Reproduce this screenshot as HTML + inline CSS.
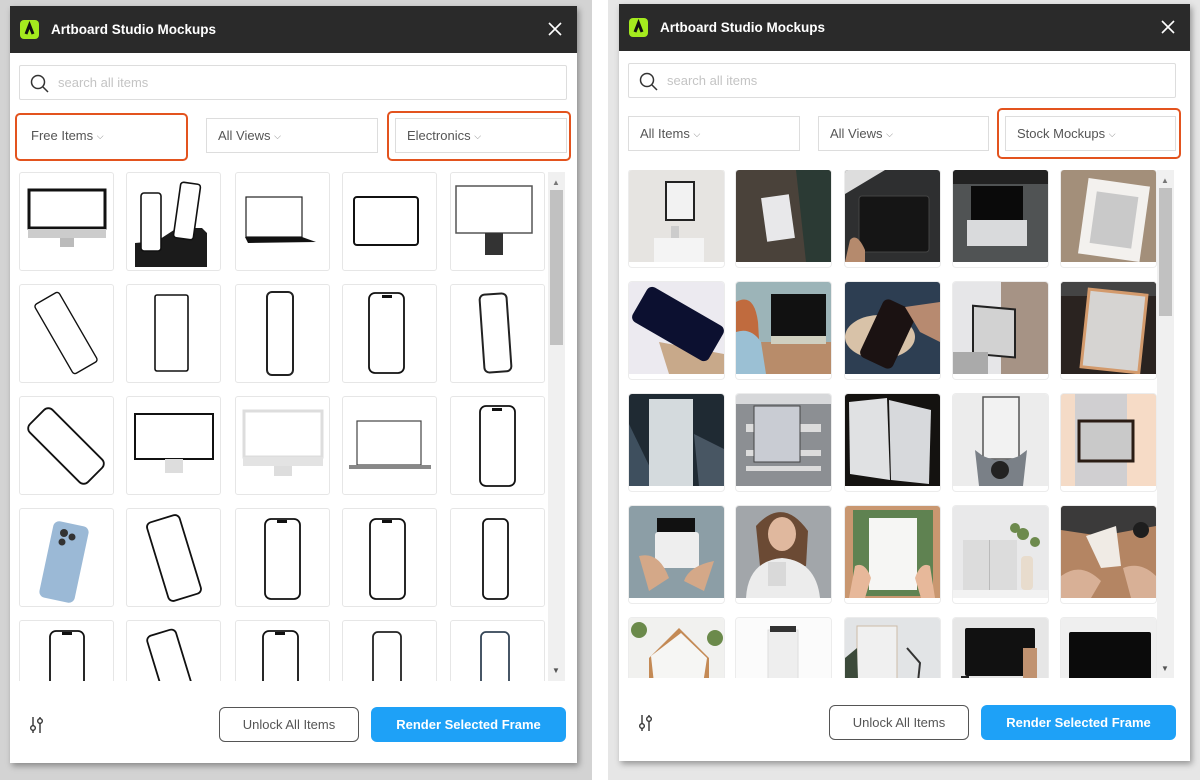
<!DOCTYPE html>
<html><head><meta charset="utf-8"><style>
*{box-sizing:border-box;margin:0;padding:0}
body{width:1200px;height:780px;position:relative;overflow:hidden;background:#fff;font-family:"Liberation Sans",Arial,sans-serif}
.bgL{position:absolute;left:0;top:0;width:592px;height:780px;background:#d3d3d3}
.bgR{position:absolute;left:608px;top:0;width:592px;height:780px;background:#e6e6e6}
.panel{position:absolute;background:#fff;box-shadow:2px 3px 6px rgba(0,0,0,.35);overflow:hidden}
.hdr{position:absolute;left:0;top:0;right:0;height:47px;background:#2a2a2a}
.logo{position:absolute;left:10px;top:14px;width:19px;height:19px;border-radius:4px;background:#a4ea1e}
.title{position:absolute;left:41px;top:16px;color:#fff;font-weight:bold;font-size:13.5px}
.x{position:absolute;right:14px;top:15px}
.a{position:absolute}
.search{border:1px solid #ddd;border-radius:2px;height:35px}
.search span{position:absolute;left:38px;top:9px;color:#c4c4c4;font-size:13px}
.dd{border:1px solid #ddd;height:35px;font-size:13px;color:#555;padding:9px 0 0 11px}
.dd small{font-size:9px;color:#888;position:relative;top:-1px}
.or{border:2px solid #e3531e;border-radius:5px}
.card{position:absolute;width:95px;height:99px;border:1px solid #e6e6e6;border-radius:3px;background:#fff;overflow:hidden}
.ph{position:absolute;width:95px;height:97px;border-radius:3px;overflow:hidden;box-shadow:0 0 0 1px #ececec;background:#fff}
.ph svg{display:block}
.sb{position:absolute;width:17px;background:#f0f0f0}
.btn1{position:absolute;border:1px solid #555;border-radius:6px;height:35px;width:140px;font-size:13px;color:#555;text-align:center;line-height:33px}
.btn2{position:absolute;border-radius:6px;height:35px;background:#1ea1f7;color:#fff;font-weight:bold;font-size:13px;text-align:center;line-height:35px}
</style></head><body>
<div class="bgL"></div><div class="bgR"></div>

<!-- LEFT PANEL -->
<div class="panel" style="left:10px;top:6px;width:567px;height:757px">
 <div class="hdr"><div class="logo"><svg width="19" height="19"><path d="M6 14 L9.5 5 L13 14" stroke="#111" stroke-width="3" fill="none"/></svg></div><div class="title">Artboard Studio Mockups</div>
 <svg class="x" width="16" height="16"><path d="M2 2L14 14M14 2L2 14" stroke="#fff" stroke-width="1.6"/></svg></div>
 <div class="a search" style="left:9px;top:59px;width:548px"><svg class="a" style="left:10px;top:8px" width="20" height="20"><circle cx="8" cy="8" r="6.5" stroke="#333" stroke-width="1.5" fill="none"/><path d="M13 13L18 18" stroke="#333" stroke-width="1.5"/></svg><span>search all items</span></div>
 <div class="a or" style="left:5px;top:107px;width:173px;height:48px"></div>
 <div class="a or" style="left:377px;top:105px;width:184px;height:50px"></div>
 <div class="a dd" style="left:9px;top:112px;width:165px;border-color:transparent">Free Items <small>⌵</small></div>
 <div class="a dd" style="left:196px;top:112px;width:172px">All Views <small>⌵</small></div>
 <div class="a dd" style="left:385px;top:112px;width:172px">Electronics <small>⌵</small></div>
 <div class="a" style="left:0;top:166px;width:567px;height:509px;overflow:hidden">
  <div class="card" style="left:9px;top:0"><svg width="95" height="99"><rect x="9" y="17" width="76" height="38" fill="#fff" stroke="#111" stroke-width="3"/><rect x="8" y="56" width="78" height="9" fill="#ccc"/><rect x="40" y="65" width="14" height="9" fill="#bbb"/></svg></div>
  <div class="card" style="left:116px;top:0"><svg width="95" height="99"><path d="M8 86L8 70L30 68L50 55L75 55L80 60L80 94L8 94Z" fill="#1b1b1b"/><rect x="14" y="20" width="20" height="58" rx="3" fill="#fff" stroke="#111" stroke-width="1.6"/><rect x="50" y="10" width="20" height="56" rx="3" fill="#fff" stroke="#111" stroke-width="1.6" transform="rotate(8 60 38)"/></svg></div>
  <div class="card" style="left:225px;top:0"><svg width="95" height="99"><rect x="10" y="24" width="56" height="40" fill="#fff" stroke="#222" stroke-width="1.2"/><path d="M9 64L66 64L80 69L12 70Z" fill="#111"/></svg></div>
  <div class="card" style="left:332px;top:0"><svg width="95" height="99"><rect x="11" y="24" width="64" height="48" rx="3" fill="#fff" stroke="#111" stroke-width="2"/></svg></div>
  <div class="card" style="left:440px;top:0"><svg width="95" height="99"><rect x="5" y="13" width="76" height="47" fill="#fff" stroke="#555" stroke-width="1.5"/><rect x="34" y="60" width="18" height="22" fill="#333"/></svg></div>
  <div class="card" style="left:9px;top:112px"><svg width="95" height="99"><rect x="32" y="8" width="28" height="80" rx="3" fill="#fff" stroke="#111" stroke-width="1.4" transform="rotate(-30 46 48)"/></svg></div>
  <div class="card" style="left:116px;top:112px"><svg width="95" height="99"><rect x="28" y="10" width="33" height="76" rx="2" fill="#fff" stroke="#111" stroke-width="1.6"/></svg></div>
  <div class="card" style="left:225px;top:112px"><svg width="95" height="99"><rect x="31" y="7" width="26" height="83" rx="5" fill="#fff" stroke="#222" stroke-width="2"/></svg></div>
  <div class="card" style="left:332px;top:112px"><svg width="95" height="99"><rect x="26" y="8" width="35" height="80" rx="6" fill="#fff" stroke="#111" stroke-width="1.8"/><rect x="39" y="10" width="10" height="3" fill="#111"/></svg></div>
  <div class="card" style="left:440px;top:112px"><svg width="95" height="99"><rect x="31" y="9" width="27" height="78" rx="5" fill="#fff" stroke="#222" stroke-width="2" transform="rotate(-4 44 48)"/></svg></div>
  <div class="card" style="left:9px;top:224px"><svg width="95" height="99"><rect x="30" y="8" width="32" height="82" rx="6" fill="#fff" stroke="#111" stroke-width="1.8" transform="rotate(-45 46 49)"/></svg></div>
  <div class="card" style="left:116px;top:224px"><svg width="95" height="99"><rect x="8" y="17" width="78" height="45" fill="#fff" stroke="#111" stroke-width="2"/><rect x="38" y="62" width="18" height="14" fill="#ddd"/></svg></div>
  <div class="card" style="left:225px;top:224px"><svg width="95" height="99"><rect x="8" y="14" width="78" height="46" fill="#fff" stroke="#ddd" stroke-width="3"/><rect x="7" y="60" width="80" height="9" fill="#e3e3e3"/><rect x="38" y="69" width="18" height="10" fill="#ddd"/></svg></div>
  <div class="card" style="left:332px;top:224px"><svg width="95" height="99"><rect x="14" y="24" width="64" height="44" fill="#fff" stroke="#444" stroke-width="1.2"/><rect x="6" y="68" width="82" height="4" fill="#888"/></svg></div>
  <div class="card" style="left:440px;top:224px"><svg width="95" height="99"><rect x="29" y="9" width="35" height="80" rx="6" fill="#fff" stroke="#111" stroke-width="1.8"/><rect x="41" y="11" width="10" height="3" fill="#111"/></svg></div>
  <div class="card" style="left:9px;top:336px"><svg width="95" height="99"><rect x="26" y="14" width="36" height="78" rx="6" fill="#9bb9d6" transform="rotate(12 44 53)"/><circle cx="44" cy="24" r="4" fill="#333"/><circle cx="52" cy="28" r="3.5" fill="#333"/><circle cx="42" cy="33" r="3.5" fill="#333"/></svg></div>
  <div class="card" style="left:116px;top:336px"><svg width="95" height="99"><rect x="30" y="8" width="34" height="82" rx="5" fill="#fff" stroke="#111" stroke-width="1.8" transform="rotate(-17 47 49)"/></svg></div>
  <div class="card" style="left:225px;top:336px"><svg width="95" height="99"><rect x="29" y="10" width="35" height="80" rx="6" fill="#fff" stroke="#111" stroke-width="1.8"/><rect x="41" y="11" width="10" height="3" fill="#111"/></svg></div>
  <div class="card" style="left:332px;top:336px"><svg width="95" height="99"><rect x="27" y="10" width="35" height="80" rx="6" fill="#fff" stroke="#111" stroke-width="1.8"/><rect x="39" y="11" width="10" height="3" fill="#111"/></svg></div>
  <div class="card" style="left:440px;top:336px"><svg width="95" height="99"><rect x="32" y="10" width="25" height="80" rx="5" fill="#fff" stroke="#111" stroke-width="1.8"/></svg></div>
  <div class="card" style="left:9px;top:448px"><svg width="95" height="99"><rect x="30" y="10" width="34" height="90" rx="6" fill="#fff" stroke="#111" stroke-width="1.8"/><rect x="42" y="11" width="10" height="3" fill="#111"/></svg></div>
  <div class="card" style="left:116px;top:448px"><svg width="95" height="99"><rect x="30" y="10" width="30" height="90" rx="5" fill="#fff" stroke="#111" stroke-width="1.8" transform="rotate(-17 45 50)"/></svg></div>
  <div class="card" style="left:225px;top:448px"><svg width="95" height="99"><rect x="27" y="10" width="35" height="90" rx="6" fill="#fff" stroke="#111" stroke-width="1.8"/><rect x="39" y="11" width="10" height="3" fill="#111"/></svg></div>
  <div class="card" style="left:332px;top:448px"><svg width="95" height="99"><rect x="30" y="11" width="28" height="90" rx="5" fill="#fff" stroke="#222" stroke-width="1.8"/></svg></div>
  <div class="card" style="left:440px;top:448px"><svg width="95" height="99"><rect x="30" y="11" width="28" height="90" rx="5" fill="#fff" stroke="#345" stroke-width="1.8"/></svg></div>
  <div class="sb" style="left:538px;top:0;height:509px"><div class="a" style="left:2px;top:18px;width:13px;height:155px;background:#c1c1c1"></div><div class="a" style="left:4px;top:6px;font-size:8px;color:#777">▲</div><div class="a" style="left:4px;top:494px;font-size:8px;color:#555">▼</div></div>
 </div>
 <svg class="a" style="left:19px;top:709px" width="16" height="20"><path d="M4 2V18M11 2V18" stroke="#333" stroke-width="1.4"/><circle cx="4" cy="13" r="2.3" fill="#fff" stroke="#333" stroke-width="1.4"/><circle cx="11" cy="6" r="2.3" fill="#fff" stroke="#333" stroke-width="1.4"/></svg>
 <div class="btn1" style="left:209px;top:701px">Unlock All Items</div>
 <div class="btn2" style="left:361px;top:701px;width:195px">Render Selected Frame</div>
</div>

<!-- RIGHT PANEL -->
<div class="panel" style="left:619px;top:4px;width:571px;height:757px">
 <div class="hdr"><div class="logo"><svg width="19" height="19"><path d="M6 14 L9.5 5 L13 14" stroke="#111" stroke-width="3" fill="none"/></svg></div><div class="title">Artboard Studio Mockups</div>
 <svg class="x" width="16" height="16"><path d="M2 2L14 14M14 2L2 14" stroke="#fff" stroke-width="1.6"/></svg></div>
 <div class="a search" style="left:9px;top:59px;width:548px"><svg class="a" style="left:10px;top:8px" width="20" height="20"><circle cx="8" cy="8" r="6.5" stroke="#333" stroke-width="1.5" fill="none"/><path d="M13 13L18 18" stroke="#333" stroke-width="1.5"/></svg><span>search all items</span></div>
 <div class="a or" style="left:378px;top:104px;width:184px;height:51px"></div>
 <div class="a dd" style="left:9px;top:112px;width:172px">All Items <small>⌵</small></div>
 <div class="a dd" style="left:199px;top:112px;width:171px">All Views <small>⌵</small></div>
 <div class="a dd" style="left:386px;top:112px;width:171px">Stock Mockups <small>⌵</small></div>
 <div class="a" style="left:0;top:166px;width:571px;height:508px;overflow:hidden">
  <div class="ph" style="left:10px;top:0"><svg width="95" height="92"><rect width="95" height="92" fill="#e6e4e1"/><rect x="37" y="12" width="28" height="38" fill="#f2f2f2" stroke="#222" stroke-width="2"/><rect x="25" y="68" width="50" height="24" fill="#f4f4f4"/><rect x="42" y="56" width="8" height="12" fill="#ccc"/></svg></div>
  <div class="ph" style="left:117px;top:0"><svg width="95" height="92"><rect width="95" height="92" fill="#4a423a"/><path d="M60 0H95V92H70Z" fill="#2b3a34"/><rect x="28" y="26" width="28" height="44" fill="#e8e8ea" transform="rotate(-8 42 48)"/></svg></div>
  <div class="ph" style="left:226px;top:0"><svg width="95" height="92"><rect width="95" height="92" fill="#2e2f30"/><path d="M0 0H40L0 24Z" fill="#ddd"/><rect x="14" y="26" width="70" height="56" rx="3" fill="#151515" stroke="#444"/><path d="M5 70Q12 62 20 80L20 92H0Z" fill="#b58a6d"/></svg></div>
  <div class="ph" style="left:334px;top:0"><svg width="95" height="92"><rect width="95" height="92" fill="#505354"/><rect width="95" height="14" fill="#222"/><rect x="18" y="16" width="52" height="34" fill="#0a0a0a"/><rect x="14" y="50" width="60" height="26" fill="#d9dadc"/></svg></div>
  <div class="ph" style="left:442px;top:0"><svg width="95" height="92"><rect width="95" height="92" fill="#a38f7a"/><rect x="22" y="12" width="62" height="76" fill="#f3f1ee" transform="rotate(8 53 50)"/><rect x="32" y="24" width="42" height="52" fill="#c9c9c9" transform="rotate(8 53 50)"/></svg></div>
  <div class="ph" style="left:10px;top:112px"><svg width="95" height="92"><rect width="95" height="92" fill="#eceaf0"/><path d="M30 60L95 72V92H40Z" fill="#c8a98a"/><rect x="5" y="22" width="88" height="40" rx="6" fill="#0c1030" transform="rotate(30 49 42)"/></svg></div>
  <div class="ph" style="left:117px;top:112px"><svg width="95" height="92"><rect width="95" height="92" fill="#9cb4b8"/><rect x="0" y="60" width="95" height="32" fill="#b88c6a"/><rect x="35" y="12" width="55" height="42" fill="#111"/><rect x="35" y="54" width="55" height="8" fill="#cfcfc0"/><path d="M0 20Q18 10 22 40L25 92H0Z" fill="#c06b3e"/><path d="M0 50Q15 45 25 60L30 92H0Z" fill="#9bc0d4"/></svg></div>
  <div class="ph" style="left:226px;top:112px"><svg width="95" height="92"><rect width="95" height="92" fill="#2d3e52"/><ellipse cx="35" cy="55" rx="35" ry="22" fill="#d8c2a8"/><rect x="25" y="20" width="36" height="64" rx="6" fill="#1b1212" transform="rotate(25 43 52)"/><path d="M60 25L95 20V60L75 50Z" fill="#b78a70"/></svg></div>
  <div class="ph" style="left:334px;top:112px"><svg width="95" height="92"><rect width="95" height="92" fill="#e6e6e8"/><rect x="48" y="0" width="47" height="92" fill="#a69385"/><rect x="20" y="22" width="42" height="48" fill="#d2d2d2" stroke="#222" stroke-width="2" transform="skewY(5)"/><rect x="0" y="70" width="35" height="22" fill="#aaa"/></svg></div>
  <div class="ph" style="left:442px;top:112px"><svg width="95" height="92"><rect width="95" height="92" fill="#2a2320"/><rect x="0" y="0" width="95" height="14" fill="#444"/><rect x="24" y="10" width="58" height="78" fill="#d6d4d2" stroke="#d39a6c" stroke-width="3" transform="rotate(6 53 49)"/></svg></div>
  <div class="ph" style="left:10px;top:224px"><svg width="95" height="92"><rect width="95" height="92" fill="#1f2a33"/><path d="M0 30L30 92H0Z" fill="#3e4f5e"/><path d="M65 40L95 55V92H70Z" fill="#485663"/><rect x="20" y="5" width="44" height="87" fill="#d4dadd"/></svg></div>
  <div class="ph" style="left:117px;top:224px"><svg width="95" height="92"><rect width="95" height="92" fill="#d7d8da"/><rect x="0" y="10" width="95" height="82" fill="#8c8f93"/><rect x="10" y="30" width="75" height="8" fill="#dcdcdc"/><rect x="10" y="56" width="75" height="6" fill="#dcdcdc"/><rect x="10" y="72" width="75" height="5" fill="#dcdcdc"/><rect x="18" y="12" width="46" height="56" fill="#c9ccd3" stroke="#444"/></svg></div>
  <div class="ph" style="left:226px;top:224px"><svg width="95" height="92"><rect width="95" height="92" fill="#141210"/><path d="M4 8L42 4L45 86L5 80Z" fill="#e0e1e3"/><path d="M44 6L86 16L84 90L46 86Z" fill="#d7d9dc"/></svg></div>
  <div class="ph" style="left:334px;top:224px"><svg width="95" height="92"><rect width="95" height="92" fill="#ececec"/><rect x="30" y="3" width="36" height="62" fill="#f2f2f2" stroke="#555" stroke-width="1.5"/><path d="M22 56L26 92H70L74 56L66 62Q48 70 30 62Z" fill="#7a8087"/><circle cx="47" cy="76" r="9" fill="#222"/></svg></div>
  <div class="ph" style="left:442px;top:224px"><svg width="95" height="92"><rect width="95" height="92" fill="#d0cfd1"/><rect x="0" width="14" height="92" fill="#f4dbc7"/><rect x="66" width="29" height="92" fill="#f6dbc6"/><rect x="18" y="27" width="54" height="40" fill="#c9c9c9" stroke="#2a1c14" stroke-width="3"/></svg></div>
  <div class="ph" style="left:10px;top:336px"><svg width="95" height="92"><rect width="95" height="92" fill="#8c9ea6"/><rect x="28" y="12" width="38" height="14" fill="#111"/><rect x="26" y="26" width="44" height="36" rx="3" fill="#eee"/><path d="M10 50Q30 45 40 72L20 85Z" fill="#d4a888"/><path d="M85 55Q60 60 55 75L75 85Z" fill="#d4a888"/></svg></div>
  <div class="ph" style="left:117px;top:336px"><svg width="95" height="92"><rect width="95" height="92" fill="#a2a6aa"/><path d="M20 20Q47 -10 72 25L70 60H24Z" fill="#6b4a34"/><ellipse cx="46" cy="28" rx="14" ry="17" fill="#e0b89e"/><path d="M10 92Q12 55 46 52Q80 55 84 92Z" fill="#ececec"/><rect x="32" y="56" width="18" height="24" fill="#d9d9d9"/></svg></div>
  <div class="ph" style="left:226px;top:336px"><svg width="95" height="92"><rect width="95" height="92" fill="#c99770"/><rect x="8" y="4" width="80" height="86" fill="#5f8251"/><rect x="24" y="12" width="48" height="72" fill="#f6f6f4"/><path d="M10 60Q20 55 26 72L20 92H4Z" fill="#e7b89a"/><path d="M85 60Q76 55 70 72L76 92H90Z" fill="#e7b89a"/></svg></div>
  <div class="ph" style="left:334px;top:336px"><svg width="95" height="92"><rect width="95" height="92" fill="#e9e9ea"/><rect x="10" y="34" width="54" height="50" fill="#dcdcdc"/><rect x="36" y="34" width="1" height="50" fill="#bbb"/><rect x="68" y="50" width="12" height="34" rx="4" fill="#e8dccd"/><circle cx="70" cy="28" r="6" fill="#6d8a4d"/><circle cx="82" cy="36" r="5" fill="#6d8a4d"/><circle cx="62" cy="22" r="5" fill="#6d8a4d"/><rect x="0" y="84" width="95" height="8" fill="#f2f2f2"/></svg></div>
  <div class="ph" style="left:442px;top:336px"><svg width="95" height="92"><rect width="95" height="92" fill="#b48563"/><path d="M0 0H95V20L40 30L0 24Z" fill="#3b3a3a"/><path d="M25 30L55 20L60 60L40 62Z" fill="#f0ebe5"/><circle cx="80" cy="24" r="8" fill="#1e1e1e"/><path d="M0 70Q20 55 40 75L30 92H0Z" fill="#d8b096"/><path d="M62 62Q80 55 95 70V92H70Z" fill="#d8b096"/></svg></div>
  <div class="ph" style="left:10px;top:448px"><svg width="95" height="92"><rect width="95" height="92" fill="#f1f1ef"/><path d="M20 40L50 10L80 40V92H20Z" fill="#c48a55"/><path d="M22 38L52 15L78 40L70 92H28Z" fill="#f6f6f4"/><circle cx="10" cy="12" r="8" fill="#6b8a4b"/><circle cx="86" cy="20" r="8" fill="#6b8a4b"/><circle cx="10" cy="70" r="7" fill="#6b8a4b"/></svg></div>
  <div class="ph" style="left:117px;top:448px"><svg width="95" height="92"><rect width="95" height="92" fill="#fbfbfb"/><rect x="32" y="12" width="30" height="80" fill="#eee" stroke="#ddd"/><rect x="34" y="8" width="26" height="6" fill="#333"/></svg></div>
  <div class="ph" style="left:226px;top:448px"><svg width="95" height="92"><rect width="95" height="92" fill="#e2e4e6"/><rect x="12" y="8" width="40" height="84" fill="#f0f0f0" stroke="#cdbba8"/><path d="M0 40L12 30L14 92H0Z" fill="#3c4a3a"/><path d="M62 30L75 45L70 92" stroke="#333" stroke-width="2" fill="none"/></svg></div>
  <div class="ph" style="left:334px;top:448px"><svg width="95" height="92"><rect width="95" height="92" fill="#e6e6e6"/><rect x="12" y="10" width="70" height="48" rx="2" fill="#111"/><rect x="0" y="72" width="95" height="20" fill="#f4f4f4"/><rect x="8" y="58" width="8" height="14" fill="#222"/><rect x="70" y="30" width="14" height="32" fill="#c09270"/></svg></div>
  <div class="ph" style="left:442px;top:448px"><svg width="95" height="92"><rect width="95" height="92" fill="#efefef"/><rect x="8" y="14" width="82" height="78" rx="2" fill="#0b0b0b"/></svg></div>
  <div class="sb" style="left:538px;top:0;height:508px"><div class="a" style="left:2px;top:18px;width:13px;height:128px;background:#c1c1c1"></div><div class="a" style="left:4px;top:6px;font-size:8px;color:#777">▲</div><div class="a" style="left:4px;top:494px;font-size:8px;color:#555">▼</div></div>
 </div>
 <svg class="a" style="left:19px;top:709px" width="16" height="20"><path d="M4 2V18M11 2V18" stroke="#333" stroke-width="1.4"/><circle cx="4" cy="13" r="2.3" fill="#fff" stroke="#333" stroke-width="1.4"/><circle cx="11" cy="6" r="2.3" fill="#fff" stroke="#333" stroke-width="1.4"/></svg>
 <div class="btn1" style="left:210px;top:701px">Unlock All Items</div>
 <div class="btn2" style="left:362px;top:701px;width:195px">Render Selected Frame</div>
</div>
</body></html>
